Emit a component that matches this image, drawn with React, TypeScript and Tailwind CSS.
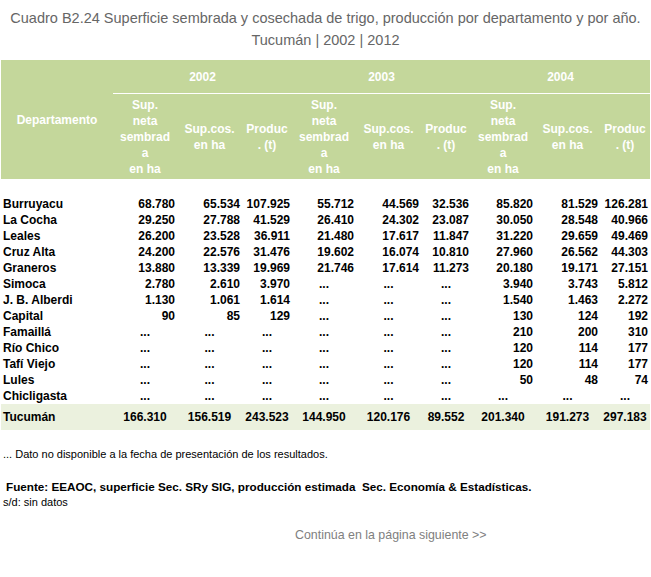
import React from 'react';

const rows: string[][] = [
  ['Burruyacu', '68.780', '65.534', '107.925', '55.712', '44.569', '32.536', '85.820', '81.529', '126.281'],
  ['La Cocha', '29.250', '27.788', '41.529', '26.410', '24.302', '23.087', '30.050', '28.548', '40.966'],
  ['Leales', '26.200', '23.528', '36.911', '21.480', '17.617', '11.847', '31.220', '29.659', '49.469'],
  ['Cruz Alta', '24.200', '22.576', '31.476', '19.602', '16.074', '10.810', '27.960', '26.562', '44.303'],
  ['Graneros', '13.880', '13.339', '19.969', '21.746', '17.614', '11.273', '20.180', '19.171', '27.151'],
  ['Simoca', '2.780', '2.610', '3.970', '...', '...', '...', '3.940', '3.743', '5.812'],
  ['J. B. Alberdi', '1.130', '1.061', '1.614', '...', '...', '...', '1.540', '1.463', '2.272'],
  ['Capital', '90', '85', '129', '...', '...', '...', '130', '124', '192'],
  ['Famaillá', '...', '...', '...', '...', '...', '...', '210', '200', '310'],
  ['Río Chico', '...', '...', '...', '...', '...', '...', '120', '114', '177'],
  ['Tafí Viejo', '...', '...', '...', '...', '...', '...', '120', '114', '177'],
  ['Lules', '...', '...', '...', '...', '...', '...', '50', '48', '74'],
  ['Chicligasta', '...', '...', '...', '...', '...', '...', '...', '...', '...'],
];

const total = ['Tucumán', '166.310', '156.519', '243.523', '144.950', '120.176', '89.552', '201.340', '191.273', '297.183'];

const years = ['2002', '2003', '2004'];

const cols = 'grid grid-cols-[112px_64px_65px_50px_64px_65px_50px_64px_65px_50px]';

const SubHeaders: React.FC = () => (
  <>
    <div className="flex items-center justify-center text-center leading-4">
      Sup.<br />neta<br />sembrad<br />a<br />en ha
    </div>
    <div className="flex items-center justify-center text-center leading-4">
      Sup.cos.<br />en ha
    </div>
    <div className="flex items-center justify-center text-center leading-4">
      Produc<br />. (t)
    </div>
  </>
);

export default function App() {
  return (
    <div className="w-[651px] h-[577px] bg-white font-['Liberation_Sans',Arial,sans-serif] text-black">
      <div className="pt-[7px] text-center text-[14.5px] leading-[22px] text-[#666666]">
        Cuadro B2.24 Superficie sembrada y cosechada de trigo, producción por departamento y por año.
        <br />
        Tucumán | 2002 | 2012
      </div>

      <div className="mt-[9px] ml-px w-[649px]">
        <div className={`${cols} grid-rows-[34px_85px] bg-[#c4d79b] text-white font-bold text-[12px]`}>
          <div className="row-span-2 flex items-center justify-center">Departamento</div>
          {years.map((y) => (
            <div key={y} className="col-span-3 flex items-center justify-center border-b border-white">
              {y}
            </div>
          ))}
          <SubHeaders />
          <SubHeaders />
          <SubHeaders />
        </div>

        <div className="h-[17px]" />

        {rows.map((r) => (
          <div key={r[0]} className={`${cols} h-4 items-center text-[12px] font-bold leading-4`}>
            <div className="pl-[2px] whitespace-nowrap">{r[0]}</div>
            {r.slice(1).map((v, i) => (
              <div key={i} className={v === '...' ? 'text-center' : 'text-right pr-[2px]'}>
                {v}
              </div>
            ))}
          </div>
        ))}

        <div className={`${cols} h-[26px] items-center bg-[#ebf1de] text-[12px] font-bold`}>
          <div className="pl-[2px]">{total[0]}</div>
          {total.slice(1).map((v, i) => (
            <div key={i} className="text-center">
              {v}
            </div>
          ))}
        </div>
      </div>

      <div className="mt-[18px] pl-[3px] text-[11px] leading-[13px]">
        ... Dato no disponible a la fecha de presentación de los resultados.
      </div>
      <div className="mt-[18px] pl-[6px] text-[11.7px] font-bold leading-[15px] whitespace-pre">
        Fuente: EEAOC, superficie Sec. SRy SIG, producción estimada  Sec. Economía &amp; Estadísticas.
      </div>
      <div className="mt-[2px] pl-[3px] text-[11px] leading-[13px]">s/d: sin datos</div>
      <div className="mt-[19px] pl-[295px] text-[12.4px] leading-[15px] text-[#808080]">
        Continúa en la página siguiente &gt;&gt;
      </div>
    </div>
  );
}
